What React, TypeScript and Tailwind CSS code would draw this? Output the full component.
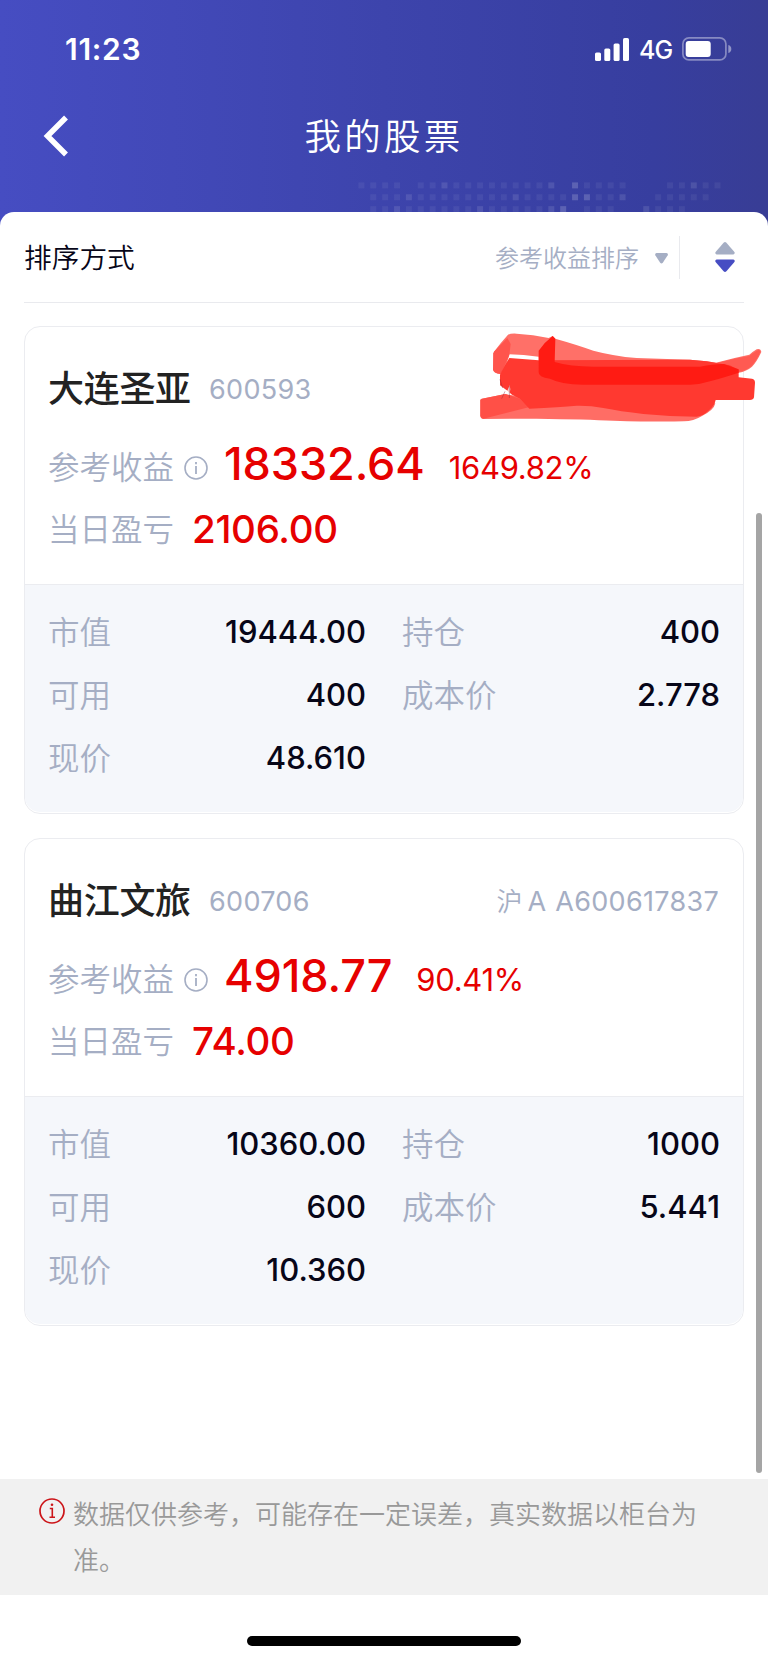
import React from 'react';

type Stock = {
  name: string;
  code: string;
  market?: string;
  account?: string;
  profit: string;
  profitRate: string;
  dayProfit: string;
  details: { label: string; value: string }[];
};

const stocks: Stock[] = [
  {
    name: '大连圣亚',
    code: '600593',
    profit: '18332.64',
    profitRate: '1649.82%',
    dayProfit: '2106.00',
    details: [
      { label: '市值', value: '19444.00' },
      { label: '持仓', value: '400' },
      { label: '可用', value: '400' },
      { label: '成本价', value: '2.778' },
      { label: '现价', value: '48.610' },
    ],
  },
  {
    name: '曲江文旅',
    code: '600706',
    market: '沪',
    account: 'A A600617837',
    profit: '4918.77',
    profitRate: '90.41%',
    dayProfit: '74.00',
    details: [
      { label: '市值', value: '10360.00' },
      { label: '持仓', value: '1000' },
      { label: '可用', value: '600' },
      { label: '成本价', value: '5.441' },
      { label: '现价', value: '10.360' },
    ],
  },
];

// brightness of each dot, one string per row
const dotRows = [
  '1111011211111111203111100011211',
  '0111211111111211113311200111110',
  '0112111111211111230111002111000',
];
const dotOpacity = [0, 0.06, 0.11, 0.18];

const HeaderDots = () => (
  <svg className="absolute left-[358px] top-[182px]" width="370" height="30" viewBox="0 0 370 30">
    {dotRows.map((row, y) =>
      row.split('').map((level, x) => (
        <rect
          key={`${y}-${x}`}
          x={x * 11.87 + 0.4}
          y={y * 11.87 + 0.4}
          width="6"
          height="6"
          fill="#fff"
          opacity={dotOpacity[Number(level)]}
        />
      ))
    )}
  </svg>
);

const StatusBar = () => (
  <div className="flex h-[98px] items-center justify-between pl-[65px] pr-[36px]">
    <span className="text-[30px] font-semibold leading-none tracking-[0.7px]">11:23</span>
    <div className="flex items-center">
      <svg width="34" height="23" viewBox="0 0 34 23" fill="#fff">
        <rect x="0" y="14.5" width="6" height="8.5" rx="1.6" />
        <rect x="9.3" y="10.5" width="6" height="12.5" rx="1.6" />
        <rect x="18.6" y="5.5" width="6" height="17.5" rx="1.6" />
        <rect x="28" y="0" width="6" height="23" rx="1.6" />
      </svg>
      <span className="ml-[10px] mt-[3px] w-[33px] text-[25px] font-medium leading-none tracking-[-0.8px]">4G</span>
      <svg className="ml-[10px]" width="50" height="24" viewBox="0 0 50 24">
        <rect x="0.9" y="0.9" width="43" height="22" rx="6" fill="none" stroke="#fff" strokeOpacity="0.4" strokeWidth="1.7" />
        <rect x="3.7" y="4" width="25" height="16" rx="3" fill="#fff" />
        <path d="M46.3 8c2 .6 3 2 3 4s-1 3.400-3 4z" fill="#fff" opacity="0.45" />
      </svg>
    </div>
  </div>
);

const InfoIcon = () => (
  <svg width="24" height="24" viewBox="0 0 24 24" fill="none" stroke="#a5aec4" strokeWidth="1.6">
    <circle cx="12" cy="12" r="11" />
    <path d="M12 10v8" strokeWidth="1.8" />
    <path d="M12 6v2.200" strokeWidth="1.8" />
  </svg>
);

const Scribble = () => (
  <svg className="absolute left-[445px] top-[-7px]" width="298" height="110" viewBox="0 0 894 330">
    <path
      d="M72 95Q92 68 114 44Q122 40 140 41Q190 44 236 54L248 48L256 56Q320 74 370 92Q430 108 500 114L660 119L710 124L738 128Q800 112 838 104Q850 94 860 88Q872 84 874 96Q860 126 846 140Q830 154 806 158L740 172L240 172L206 160V120L118 106L110 130L92 162Q70 160 69 148V100Z"
      fill="#ff7068"
    />
    <path d="M738 130Q800 114 838 108Q856 94 866 90Q872 90 870 98Q858 124 844 138Q830 152 806 156L780 136Z" fill="#ff5a52" />
    <path d="M118 103Q160 104 206 110V121L118 114Z" fill="#fff" />
    <path d="M72 95L112 54L122 72L118 104L106 132L92 162Q70 160 69 148Z" fill="#ff544c" />
    <path d="M36 236L106 222L170 234L690 250L736 250Q732 270 696 288Q670 304 642 304Q560 306 430 302Q350 298 200 296L38 297Q30 294 31 284V240Q32 236 36 236Z" fill="#ff6d65" />
    <path d="M36 236L106 222L150 236L176 262L40 296Q31 294 31 286V240Z" fill="#ff5047" />
    <path
      d="M118 114L206 121L660 119L710 124L780 136L806 150V172L846 176Q855 178 855 188L852 232Q850 240 840 240H737Q734 256 718 270Q700 288 680 290Q600 290 520 282Q450 274 400 264Q360 256 320 257Q270 262 178 266L150 236L126 224L112 212L90 196V164Q98 146 118 114Z"
      fill="#ff3930"
    />
    <path d="M92 203L112 212L119 196L121 208L118 224L102 219Z" fill="#fff" opacity="0.75" />
    <path d="M105 214L95 236M118 198V234M90 178L98 204" fill="none" stroke="#8c2230" strokeWidth="2" opacity="0.6" />
    <path d="M206 92Q224 66 248 48L256 56L254 126Q300 140 370 140H690Q740 130 762 132L806 148V158Q770 170 720 184Q690 194 660 194H340Q270 192 240 176Q204 172 206 156Z" fill="#ff1b13" />
  </svg>
);

const StockCard = ({ stock }: { stock: Stock }) => (
  <div className="relative h-[488px] rounded-[16px] border-[1.5px] border-[#ebecf0]">
    <div className="h-[257px] pl-[23px] pr-6 pt-[36px]">
      <div className="flex h-[50px] items-center justify-between">
        <div className="flex items-center">
          <span className="mt-[2px] w-[145px] text-[36px] font-medium leading-none tracking-[-0.3px] text-[#222]">{stock.name}</span>
          <span className="ml-[16px] mt-[3px] text-[27px] leading-none tracking-[0.3px] text-[#a5aec4]">{stock.code}</span>
        </div>
        {stock.account && (
          <div className="mt-[3px] flex items-center text-[27px] leading-none text-[#a5aec4]">
            <span className="mr-[5px] text-[26px] font-[350]">{stock.market}</span>
            <span className="tracking-[0.3px] [word-spacing:1px]">{stock.account}</span>
          </div>
        )}
      </div>
      <div className="mt-[18px] flex h-[68px] items-center">
        <span className="mt-[5px] w-[128px] whitespace-nowrap text-[31.5px] font-[350] leading-none text-[#a5aec4]">参考收益</span>
        <span className="ml-[8px] mt-[6px]"><InfoIcon /></span>
        <span className="-mt-[3px] ml-[16px] text-[45px] font-medium leading-none tracking-[-0.1px] text-[#e60000]">{stock.profit}</span>
        <span className="ml-[24px] mt-[5px] text-[31px] leading-none tracking-[-0.3px] text-[#e60000]">{stock.profitRate}</span>
      </div>
      <div className="flex h-[60px] items-center">
        <span className="mt-[2px] w-[128px] whitespace-nowrap text-[31.5px] font-[350] leading-none text-[#a5aec4]">当日盈亏</span>
        <span className="mt-px ml-[16px] text-[38.5px] font-medium leading-none tracking-[-0.3px] text-[#e60000]">{stock.dayProfit}</span>
      </div>
    </div>
    <div className="grid h-[228px] grid-cols-[318px_318px] content-start justify-between rounded-b-[15px] border-t-[1.5px] border-[#ebecf0] bg-[#f5f7fb] pl-[23px] pr-[23px] pt-[15px]">
      {stock.details.map(item => (
        <div key={item.label} className="flex h-[63px] items-center justify-between">
          <span className="mt-[3px] text-[31.5px] font-[350] leading-none text-[#a5aec4]">{item.label}</span>
          <span className="text-[31px] font-medium leading-none text-[#070618]">{item.value}</span>
        </div>
      ))}
    </div>
    {!stock.account && <Scribble />}
  </div>
);

const App = () => {
  return (
    <div className="relative flex h-[1663px] w-[768px] flex-col overflow-hidden bg-white font-[Inter,'Noto_Sans_CJK_SC',sans-serif]">
      <header className="relative h-[236px] bg-[linear-gradient(90deg,#464dc2_0%,#3d44ac_50%,#373e9f_85%,#383d95_100%)] text-white">
        <StatusBar />
        <div className="relative flex h-[76px] items-center justify-center">
          <svg className="absolute left-[43px] top-[17px]" width="26" height="42" viewBox="0 0 26 42" fill="none" stroke="#fff" strokeWidth="5.500">
            <path d="M23 2.500L4.500 21L23 39.500" />
          </svg>
          <h1 className="pt-[2px] text-[36.5px] font-[350] leading-none tracking-[3.300px]">我的股票</h1>
        </div>
        <HeaderDots />
      </header>

      <main className="relative -mt-6 h-[1267px] rounded-t-[14px] bg-white px-6">
        <div className="flex h-[91px] items-center justify-between border-b-[1.5px] border-[#e9eaee]">
          <span className="mt-[4px] text-[27.7px] font-[350] leading-none text-[#070618]">排序方式</span>
          <div className="flex items-center">
            <span className="mt-[3px] text-[24px] font-[350] leading-none text-[#a5aec4]">参考收益排序</span>
            <svg className="ml-[16px] mt-[3px]" width="13" height="11" viewBox="0 0 13 11" fill="#a5aec4">
              <path d="M1.500 0h10q2 .3 1.200 2.200L7.800 9.800q-1.300 1.600-2.600 0L.3 2.200Q-.3.4 1.500 0z" />
            </svg>
            <div className="ml-[11px] h-[43px] w-px bg-[#e9eaee]" />
            <svg className="ml-[35px] mr-[9px]" width="20" height="30" viewBox="0 0 20 30">
              <path d="M8.600.7q1.400-1.200 2.800 0l8 9.300q1 1.800-1 2.500H1.600q-2-.7-1-2.500z" fill="#a5aec4" />
              <path d="M8.600 29.300q1.400 1.200 2.800 0l8-9.300q1-1.800-1-2.500H1.600q-2 .7-1 2.500z" fill="#464dc3" />
            </svg>
          </div>
        </div>
        <div className="flex flex-col gap-6 pt-[23px]">
          {stocks.map(stock => (
            <StockCard key={stock.code} stock={stock} />
          ))}
        </div>
        <div className="absolute right-[6px] top-[301px] h-[960px] w-[6px] rounded-full bg-[#a5a5a5]" />
      </main>

      <div className="flex h-[116px] bg-[#f1f1f1] pl-[39px] pr-[60px] pt-[13px] text-[26px] font-[350] leading-[46px] text-[#999]">
        <svg className="mr-[8px] mt-[6px] shrink-0" width="26" height="26" viewBox="0 0 26 26" fill="none" stroke="#cc1519">
          <circle cx="13" cy="13" r="12" strokeWidth="1.700" />
          <path d="M10.800 10.500H13.300V19M10.500 19.200H16" strokeWidth="1.600" />
          <circle cx="13" cy="6.800" r="1.300" fill="#cc1519" stroke="none" />
        </svg>
        <p>数据仅供参考，可能存在一定误差，真实数据以柜台为准。</p>
      </div>

      <div className="mx-auto mt-[41px] h-[10px] w-[274px] rounded-full bg-black" />
    </div>
  );
};

export default App;
